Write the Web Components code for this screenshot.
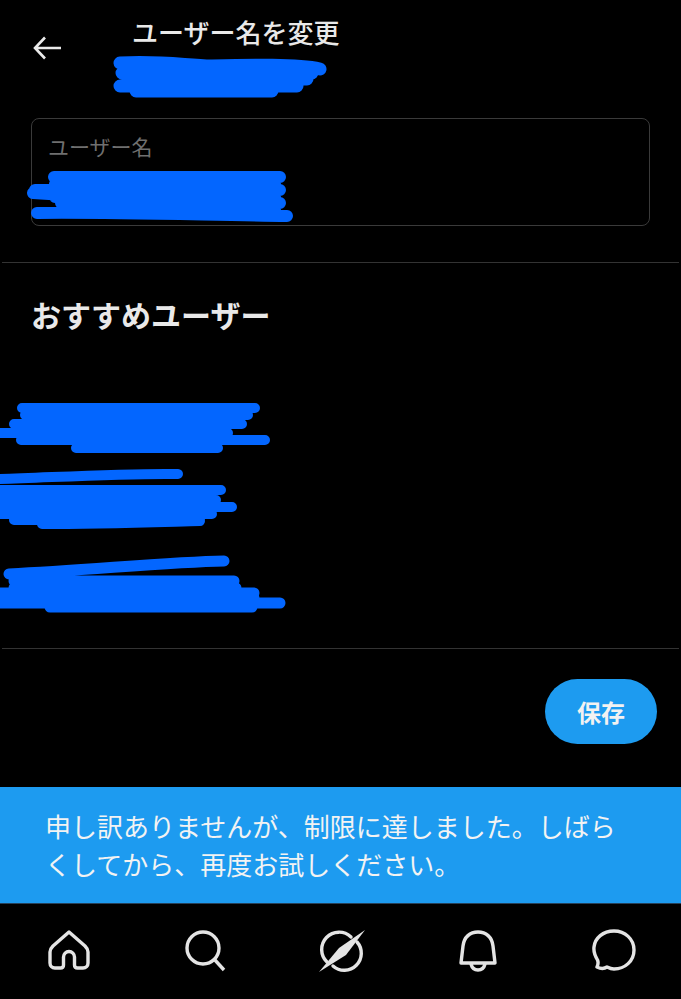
<!DOCTYPE html>
<html lang="ja">
<head>
<meta charset="utf-8">
<title>ユーザー名を変更</title>
<style>
  html, body { margin: 0; height: 100%; background: #000; }
  body { font-family: "Noto Sans CJK JP", "Noto Sans", sans-serif; }
</style>
</head>
<body>
<settings-screen>
  <top-header title="ユーザー名を変更"></top-header>
  <username-field label="ユーザー名"></username-field>
  <suggested-users heading="おすすめユーザー"></suggested-users>
  <save-row label="保存"></save-row>
  <limit-toast>申し訳ありませんが、制限に達しました。しばらくしてから、再度お試しください。</limit-toast>
  <bottom-nav></bottom-nav>
</settings-screen>

<template id="screen-template">
  <style>
    :host {
      display: flex;
      flex-direction: column;
      width: 681px;
      height: 999px;
      background: #000;
      overflow: hidden;
    }
  </style>
  <slot></slot>
</template>

<template id="scribble-template">
  <style>
    :host { display: block; line-height: 0; }
    svg { display: block; overflow: visible; }
    path { fill: none; stroke: #0366ff; stroke-linecap: round; stroke-linejoin: round; }
  </style>
  <svg><path></path></svg>
</template>

<template id="header-template">
  <style>
    :host {
      display: flex;
      height: 118px;
      box-sizing: border-box;
      padding: 14px 0 0 32px;
      color: #e9e9e9;
    }
    .back { width: 32px; height: 32px; margin-top: 18px; flex: none; }
    .text { margin-left: 68px; }
    h1 { margin: 0; font-size: 26px; line-height: 36px; font-weight: 500; white-space: nowrap; }
    red-scribble { margin: 4px 0 0 -20px; }
  </style>
  <svg class="back" viewBox="0 0 32 32" fill="none" stroke="#eaeaea" stroke-width="2.6">
    <path d="M3 16H29M13 5.500L3 16L13 26.500"/>
  </svg>
  <div class="text">
    <h1></h1>
    <red-scribble w="216" h="44" sw="13" d="M8 9C50 7 70 11 100 12C140 11 185 10 208 15M10 19H200M8 32H185M24 37H160M16 25H195"></red-scribble>
  </div>
</template>

<template id="field-template">
  <style>
    :host {
      display: block;
      height: 145px;
      box-sizing: border-box;
      padding: 0 31px;
      border-bottom: 1px solid #333;
      margin-left: 2px;
      padding-left: 29px;
      margin-right: 2px;
      padding-right: 29px;
    }
    .box {
      height: 108px;
      box-sizing: border-box;
      border: 1.500px solid #3a3a3a;
      border-radius: 8px;
      padding: 12px 0 0 16px;
    }
    label { display: block; color: #6f6f6f; font-size: 21px; line-height: 30px; }
    red-scribble { margin: 10px 0 0 -23px; }
  </style>
  <div class="box">
    <label></label>
    <red-scribble w="246" h="50" sw="12" d="M29 6H255M10 19H255M8 22L40 24M36 32H255M12 42C80 41 180 44 262 45M30 13H250M40 38H250M30 26H250"></red-scribble>
  </div>
</template>

<template id="users-template">
  <style>
    :host {
      display: block;
      height: 386px;
      box-sizing: border-box;
      margin: 0 2px;
      border-bottom: 1px solid #333;
      padding-top: 29px;
    }
    h2 {
      margin: 0 0 0 29px;
      color: #e9e9e9;
      font-size: 30px;
      line-height: 44px;
      font-weight: 700;
      white-space: nowrap;
    }
    .list { display: flex; flex-direction: column; margin-top: 66px; margin-left: -2px; }
    .list red-scribble:nth-child(2) { margin-top: 20px; }
    .list red-scribble:nth-child(3) { margin-top: 28px; }
  </style>
  <h2></h2>
  <div class="list">
    <red-scribble w="272" h="50" sw="10" d="M22 6H255M25 13H248M14 22H242M0 31H228M21 38H265M76 46H218M22 31H226"></red-scribble>
    <red-scribble w="236" h="56" sw="10" d="M0 7C60 5 130 1 178 2M0 18H221M0 28H216M0 35H232M0 42H212M14 48H200M42 52C100 52 160 50 200 49"></red-scribble>
    <red-scribble w="285" h="50" sw="11" d="M9 18C90 14 170 6 224 5M14 25H234M14 32H236M0 42H254M0 47H280M50 51H252M0 37H254"></red-scribble>
  </div>
</template>

<template id="save-template">
  <style>
    :host { display: flex; justify-content: flex-end; height: 138px; box-sizing: border-box; padding: 30px 24px 0 0; }
    button {
      width: 112px;
      height: 65px;
      border: 0;
      border-radius: 33px;
      background: #1d9bf0;
      color: #f2f2f2;
      font: 700 24px/65px "Noto Sans CJK JP", sans-serif;
      padding: 0;
    }
  </style>
  <button type="button"></button>
</template>

<template id="toast-template">
  <style>
    :host {
      display: block;
      height: 117px;
      box-sizing: border-box;
      background: #1d9bf0;
      color: #f3f3f3;
      font-size: 26px;
      line-height: 38px;
      padding: 20px 40px 0 45px;
      border-bottom: 1px solid #26415a;
    }
  </style>
  <slot></slot>
</template>

<template id="nav-template">
  <style>
    :host {
      display: flex;
      justify-content: space-between;
      align-items: center;
      height: 94px;
      padding: 0 45px 0 47px;
      box-sizing: border-box;
    }
    svg { width: 44px; height: 44px; flex: none; fill: none; stroke: #e4e4e4; stroke-width: 3.4; stroke-linejoin: round; stroke-linecap: round; }
  </style>
  <svg viewBox="0 0 44 44">
    <path d="M22 3L6 17C4.500 18.500 3 20 3 23V34C3 37 5 39 8 39H13.500C15.500 39 16.500 38 16.500 36V28C16.500 25 19 22.500 22 22.500S27.500 25 27.500 28V36C27.500 38 28.500 39 30.500 39H36C39 39 41 37 41 34V23C41 20 39.500 18.500 38 17Z"/>
  </svg>
  <svg viewBox="0 0 44 44">
    <circle cx="20" cy="19" r="16"/>
    <path d="M31.500 30.500L41 41" stroke-linecap="butt"/>
  </svg>
  <svg viewBox="0 0 44 44" style="overflow:visible">
    <path d="M7 33A17 17 0 0 1 31 8M37 13A17 17 0 0 1 13 37"/>
    <path d="M-1 43L26 26L45 1L19 19Z" fill="#e4e4e4" stroke="none"/>
  </svg>
  <svg viewBox="0 0 44 44">
    <path d="M5 34L7 17C8 8 14 3 22 3S36 8 37 17L39 34Z"/>
    <path d="M15 35C16 39 19 41 22 41S28 39 29 35"/>
  </svg>
  <svg viewBox="0 0 44 44">
    <path d="M5 38C6.500 35 6.500 33.500 5.500 31C2.500 26 1.500 22 2 18C3 9 11 2 22 2C33 2 42 10 42 21C42 32 33 40 22 40C19 40 17 39 15 38C12 40 9 40 5 38Z" stroke-linejoin="round"/>
  </svg>
</template>

<script>
  function fromTemplate(host, id) {
    const root = host.attachShadow({ mode: 'open' });
    root.appendChild(document.getElementById(id).content.cloneNode(true));
    return root;
  }

  class SettingsScreen extends HTMLElement {
    connectedCallback() { if (!this.shadowRoot) fromTemplate(this, 'screen-template'); }
  }

  class RedScribble extends HTMLElement {
    connectedCallback() {
      if (this.shadowRoot) return;
      const root = fromTemplate(this, 'scribble-template');
      const svg = root.querySelector('svg');
      svg.setAttribute('width', this.getAttribute('w'));
      svg.setAttribute('height', this.getAttribute('h'));
      const path = root.querySelector('path');
      path.setAttribute('d', this.getAttribute('d'));
      path.setAttribute('stroke-width', this.getAttribute('sw'));
    }
  }

  class TopHeader extends HTMLElement {
    connectedCallback() {
      if (this.shadowRoot) return;
      fromTemplate(this, 'header-template').querySelector('h1').textContent = this.getAttribute('title');
    }
  }

  class UsernameField extends HTMLElement {
    connectedCallback() {
      if (this.shadowRoot) return;
      fromTemplate(this, 'field-template').querySelector('label').textContent = this.getAttribute('label');
    }
  }

  class SuggestedUsers extends HTMLElement {
    connectedCallback() {
      if (this.shadowRoot) return;
      fromTemplate(this, 'users-template').querySelector('h2').textContent = this.getAttribute('heading');
    }
  }

  class SaveRow extends HTMLElement {
    connectedCallback() {
      if (this.shadowRoot) return;
      fromTemplate(this, 'save-template').querySelector('button').textContent = this.getAttribute('label');
    }
  }

  class LimitToast extends HTMLElement {
    connectedCallback() { if (!this.shadowRoot) fromTemplate(this, 'toast-template'); }
  }

  class BottomNav extends HTMLElement {
    connectedCallback() { if (!this.shadowRoot) fromTemplate(this, 'nav-template'); }
  }

  customElements.define('red-scribble', RedScribble);
  customElements.define('settings-screen', SettingsScreen);
  customElements.define('top-header', TopHeader);
  customElements.define('username-field', UsernameField);
  customElements.define('suggested-users', SuggestedUsers);
  customElements.define('save-row', SaveRow);
  customElements.define('limit-toast', LimitToast);
  customElements.define('bottom-nav', BottomNav);
</script>
</body>
</html>
